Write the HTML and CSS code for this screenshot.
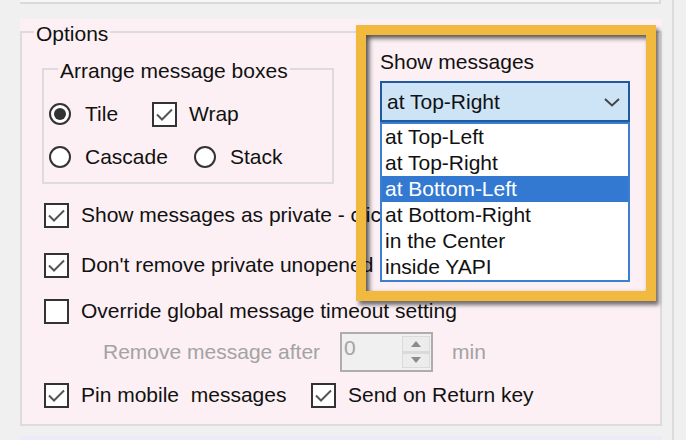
FILE: index.html
```html
<!DOCTYPE html>
<html>
<head>
<meta charset="utf-8">
<title>Options</title>
<link rel="stylesheet" href="styles.css">
</head>
<body>
<div class="window">
  <div class="main">
    <div class="topbar"></div>
    <div class="panel">
      <fieldset class="group options">
        <legend class="legend-options"><span class="legend-text">Options</span></legend>
        <div class="options-body">
          <fieldset class="group arrange">
            <legend class="legend-arrange"><span class="legend-text">Arrange message boxes</span></legend>
            <div class="arrange-body">
              <div class="opt-row">
                <div class="ctl w-tile"><span class="radio on"></span><span class="lbl">Tile</span></div>
                <div class="ctl"><span class="check"><svg viewBox="0 0 21 21" width="21" height="21"><path d="M3 10.5 L8 15.5 L18 5.5" fill="none" stroke="#555" stroke-width="2"/></svg></span><span class="lbl">Wrap</span></div>
              </div>
              <div class="opt-row second">
                <div class="ctl w-cascade"><span class="radio"></span><span class="lbl">Cascade</span></div>
                <div class="ctl"><span class="radio"></span><span class="lbl">Stack</span></div>
              </div>
            </div>
          </fieldset>

          <div class="chk-row row-private cut">
            <span class="check"><svg viewBox="0 0 21 21" width="21" height="21"><path d="M3 10.5 L8 15.5 L18 5.5" fill="none" stroke="#555" stroke-width="2"/></svg></span>
            <span class="lbl">Show messages as private - click to open</span>
          </div>
          <div class="chk-row row-keep cut">
            <span class="check"><svg viewBox="0 0 21 21" width="21" height="21"><path d="M3 10.5 L8 15.5 L18 5.5" fill="none" stroke="#555" stroke-width="2"/></svg></span>
            <span class="lbl">Don't remove private unopened messages</span>
          </div>
          <div class="chk-row row-override">
            <span class="check"></span>
            <span class="lbl">Override global message timeout setting</span>
          </div>
          <div class="remove-row">
            <span class="lbl disabled">Remove message after</span>
            <div class="spin">
              <span class="spin-value">0</span>
              <div class="spin-buttons">
                <span class="spin-btn"><svg viewBox="0 0 10 6" width="10" height="6"><path d="M0 6 L5 0 L10 6 Z" fill="#8c8c8c"/></svg></span>
                <span class="spin-btn"><svg viewBox="0 0 10 6" width="10" height="6"><path d="M0 0 L10 0 L5 6 Z" fill="#8c8c8c"/></svg></span>
              </div>
            </div>
            <span class="lbl disabled unit">min</span>
          </div>
          <div class="chk-row row-bottom">
            <div class="ctl w-pin">
              <span class="check"><svg viewBox="0 0 21 21" width="21" height="21"><path d="M3 10.5 L8 15.5 L18 5.5" fill="none" stroke="#555" stroke-width="2"/></svg></span>
              <span class="lbl">Pin mobile&nbsp; messages</span>
            </div>
            <div class="ctl">
              <span class="check"><svg viewBox="0 0 21 21" width="21" height="21"><path d="M3 10.5 L8 15.5 L18 5.5" fill="none" stroke="#555" stroke-width="2"/></svg></span>
              <span class="lbl">Send on Return key</span>
            </div>
          </div>
        </div>
      </fieldset>

      <div class="callout">
        <div class="show-label">Show messages</div>
        <div class="combo">
          <span class="combo-text">at Top-Right</span>
          <svg class="chevron" viewBox="0 0 16 9" width="16" height="9"><path d="M1 1 L8 7.5 L15 1" fill="none" stroke="#444" stroke-width="2"/></svg>
        </div>
        <ul class="droplist">
          <li>at Top-Left</li>
          <li>at Top-Right</li>
          <li class="selected">at Bottom-Left</li>
          <li>at Bottom-Right</li>
          <li>in the Center</li>
          <li>inside YAPI</li>
        </ul>
      </div>
    </div>
    <div class="strip"></div>
  </div>
  <div class="vline"></div>
</div>
</body>
</html>
```

FILE: styles.css
```css
html, body {
  margin: 0;
  padding: 0;
}

body {
  background: #f0f0f0;
  font-family: "Liberation Sans", Arial, sans-serif;
  font-size: 21px;
  color: #111;
}

.window {
  display: flex;
  width: 686px;
  height: 440px;
  overflow: hidden;
}

.main {
  width: 642px;
  margin-left: 20px;
  display: flex;
  flex-direction: column;
  flex: none;
}

.topbar {
  height: 3px;
  width: 639px;
  background: #f6f7fa;
  border-bottom: 2px solid #dadada;
  border-right: 2px solid #dadada;
}

.panel {
  position: relative;
  margin-top: 15px;
  background: #fcf0f4;
}

.group {
  margin: 0;
  padding: 0;
  min-inline-size: 0;
  border: 2px solid #dcdcdc;
  box-sizing: border-box;
}

.group legend {
  padding: 0 2px;
  height: 26px;
}

.legend-text {
  display: block;
  padding-top: 4px;
  line-height: 22px;
  height: 22px;
  white-space: nowrap;
}

.options {
  width: 642px;
}

.legend-options {
  margin-left: 12px;
}

.options-body {
  padding: 11px 20px 14px 20px;
  display: flex;
  flex-direction: column;
}

.arrange {
  width: 292px;
}

.legend-arrange {
  margin-left: 14px;
}

.arrange-body {
  padding: 17px 5px 10px 5px;
}

.opt-row {
  display: flex;
  align-items: center;
  height: 30px;
}

.opt-row.second {
  margin-top: 13px;
}

.ctl {
  display: flex;
  align-items: center;
  flex: none;
}

.w-tile {
  width: 103px;
}

.w-cascade {
  width: 145px;
}

.w-pin {
  width: 267px;
}

.radio {
  width: 22px;
  height: 22px;
  box-sizing: border-box;
  border: 2px solid #333;
  border-radius: 50%;
  background: #fff;
  margin-right: 14px;
  flex: none;
  display: flex;
  align-items: center;
  justify-content: center;
}

.radio.on::after {
  content: "";
  width: 12px;
  height: 12px;
  border-radius: 50%;
  background: #333;
}

.check {
  width: 25px;
  height: 25px;
  box-sizing: border-box;
  border: 2px solid #333;
  background: #fff;
  margin-right: 12px;
  flex: none;
  display: flex;
}

.check svg {
  display: block;
}

.lbl {
  white-space: nowrap;
  line-height: 26px;
}

.chk-row {
  display: flex;
  align-items: center;
  height: 30px;
  margin-left: 2px;
  overflow: hidden;
}

.chk-row.cut {
  width: 336px;
}

.row-private {
  margin-top: 16px;
}

.row-keep {
  margin-top: 20px;
}

.row-override {
  margin-top: 16px;
}

.remove-row {
  display: flex;
  align-items: center;
  height: 40px;
  margin-top: 6px;
  padding-left: 61px;
}

.disabled {
  color: #a3a3a3;
}

.spin {
  width: 93px;
  height: 40px;
  box-sizing: border-box;
  border: 2px solid #adadad;
  background: #f0f0f0;
  margin-left: 20px;
  display: flex;
  justify-content: space-between;
  padding: 2px 1px 2px 2px;
  flex: none;
}

.spin-value {
  color: #a3a3a3;
  line-height: 24px;
}

.spin-buttons {
  width: 28px;
  display: flex;
  flex-direction: column;
}

.spin-btn {
  flex: 1;
  display: flex;
  align-items: center;
  justify-content: center;
  background: #ececec;
  border: 1px solid #dadada;
}

.spin-btn + .spin-btn {
  border-top: 2px solid #dadada;
}

.unit {
  margin-left: 19px;
}

.row-bottom {
  margin-top: 8px;
}

.callout {
  position: absolute;
  left: 336px;
  top: 6px;
  width: 300px;
  height: 276px;
  box-sizing: border-box;
  border: 10px solid #f1b93d;
  background: transparent;
  padding: 14px 16px 0 14px;
  box-shadow: 3px 4px 4px rgba(0, 0, 0, 0.55), inset 3px 3px 5px rgba(0, 0, 0, 0.7);
}

.show-label {
  line-height: 26px;
  height: 26px;
  white-space: nowrap;
}

.combo {
  margin-top: 6px;
  height: 41px;
  box-sizing: border-box;
  border: 2px solid #1f5aa0;
  background: #cde3f6;
  display: flex;
  align-items: center;
  justify-content: space-between;
  padding: 0 8px 0 5px;
}

.combo-text {
  white-space: nowrap;
}

.chevron {
  display: block;
  margin-top: 2px;
}

.droplist {
  list-style: none;
  margin: 0;
  padding: 0;
  border: 2px solid #3b7fd3;
  background: #fff;
}

.droplist li {
  height: 26px;
  line-height: 26px;
  padding-left: 3px;
  white-space: nowrap;
}

.droplist li.selected {
  background: #3379d1;
  color: #fff;
}

.strip {
  margin-top: 10px;
  height: 6px;
  background: #ececf8;
}

.vline {
  width: 2px;
  flex: none;
  margin-left: 10px;
  background: #dcdcdc;
}
```
